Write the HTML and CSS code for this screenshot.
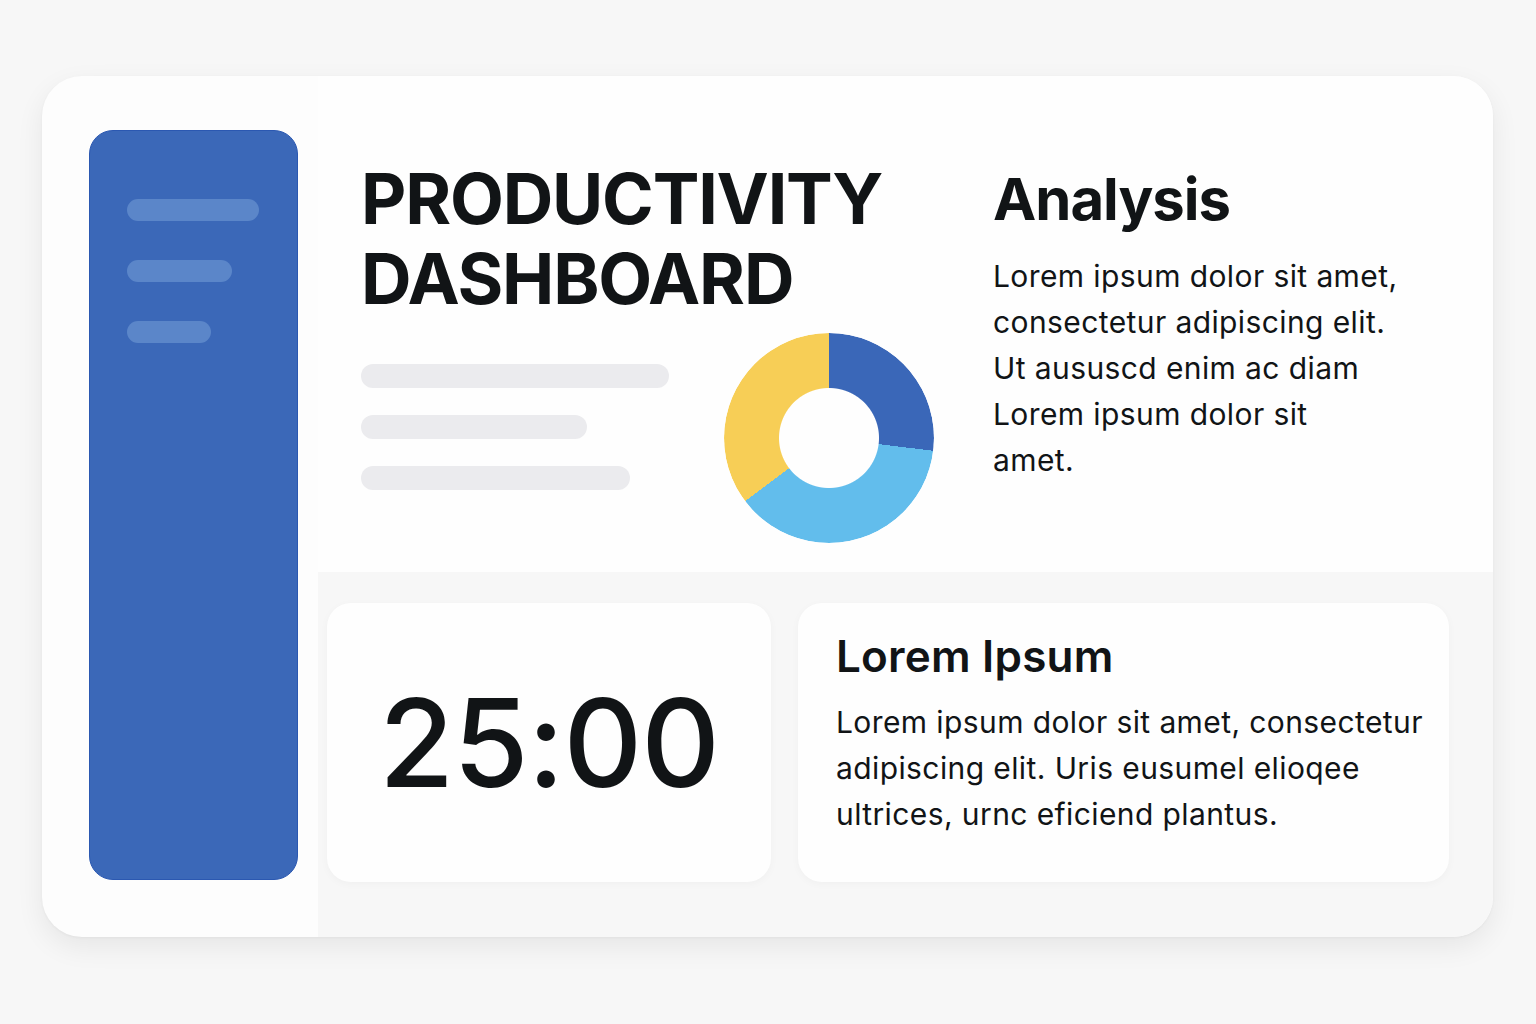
FILE: index.html
```html
<!DOCTYPE html>
<html lang="en">
<head>
<meta charset="utf-8">
<title>Productivity Dashboard</title>
<link rel="stylesheet" href="styles.css">
</head>
<body>
<div class="board">
  <div class="side-col">
    <nav class="sidebar">
      <span class="nav-bar nav-bar-1"></span>
      <span class="nav-bar nav-bar-2"></span>
      <span class="nav-bar nav-bar-3"></span>
    </nav>
  </div>
  <div class="main-col">
    <section class="top-panel">
      <div class="overview">
        <h1 class="title">PRODUCTIVITY<br>DASHBOARD</h1>
        <div class="overview-row">
          <div class="skeleton">
            <span class="sk sk-1"></span>
            <span class="sk sk-2"></span>
            <span class="sk sk-3"></span>
          </div>
          <div class="donut"></div>
        </div>
      </div>
      <div class="analysis">
        <h2 class="analysis-title">Analysis</h2>
        <p class="analysis-text">Lorem ipsum dolor sit amet,<br>consectetur adipiscing elit.<br>Ut aususcd enim ac diam<br>Lorem ipsum dolor sit<br>amet.</p>
      </div>
    </section>
    <section class="bottom-row">
      <div class="card timer-card">
        <span class="timer">25:00</span>
      </div>
      <div class="card info-card">
        <h3 class="info-title">Lorem Ipsum</h3>
        <p class="info-text">Lorem ipsum dolor sit amet, consectetur<br>adipiscing elit. Uris eusumel elioqee<br>ultrices, urnc eficiend plantus.</p>
      </div>
    </section>
  </div>
</div>
</body>
</html>
```
FILE: styles.css
```css
* { box-sizing: border-box; }
html, body { margin: 0; padding: 0; }
body {
  width: 1536px;
  height: 1024px;
  background: #f7f7f7;
  font-family: Inter, "Noto Sans", "Liberation Sans", sans-serif;
  color: #111416;
  padding: 76px 43px 0 42px;
}
.board {
  width: 1451px;
  height: 861px;
  background: #fdfdfd;
  border-radius: 40px;
  box-shadow: 0 10px 28px rgba(0, 0, 0, 0.07), 0 1px 3px rgba(0, 0, 0, 0.04);
  display: flex;
  overflow: hidden;
}
.side-col {
  width: 276px;
  padding: 54px 20px 57px 47px;
  flex: none;
}
.sidebar {
  height: 100%;
  background: #3b68b8;
  border: 1px solid #2b58b1;
  border-radius: 24px;
  display: flex;
  flex-direction: column;
  gap: 39px;
  padding: 68px 0 0 37px;
}
.nav-bar {
  display: block;
  height: 22px;
  border-radius: 11px;
  background: #5b86c9;
}
.nav-bar-1 { width: 132px; }
.nav-bar-2 { width: 105px; }
.nav-bar-3 { width: 84px; }
.main-col {
  flex: 1;
  display: flex;
  flex-direction: column;
}
.top-panel {
  height: 496px;
  background: #fefefe;
  display: flex;
  padding: 82px 0 0 43px;
}
.overview { width: 632px; flex: none; }
.title {
  margin: 0;
  font-size: 70px;
  line-height: 80px;
  font-weight: 700;
  letter-spacing: -1.2px;
  padding-top: 1px;
}
.overview-row {
  display: flex;
  align-items: flex-start;
  margin-top: 14px;
}
.skeleton {
  width: 308px;
  display: flex;
  flex-direction: column;
  gap: 27px;
  padding-top: 31px;
}
.sk {
  display: block;
  height: 24px;
  border-radius: 12px;
  background: #ebebee;
}
.sk-1 { width: 308px; }
.sk-2 { width: 226px; }
.sk-3 { width: 269px; }
.donut {
  width: 210px;
  height: 210px;
  margin-left: 55px;
  border-radius: 50%;
  background: conic-gradient(#3a67b8 0deg 97deg, #62bdec 97deg 233deg, #f7ce56 233deg 360deg);
  -webkit-mask: radial-gradient(circle at center, transparent 49.5px, #000 50.5px);
  mask: radial-gradient(circle at center, transparent 49.5px, #000 50.5px);
}
.analysis { padding-top: 5px; }
.analysis-title {
  margin: 0;
  font-size: 58px;
  line-height: 72px;
  font-weight: 700;
  letter-spacing: -1px;
}
.analysis-text {
  margin: 18px 0 0;
  font-size: 30px;
  line-height: 46px;
  font-weight: 400;
  letter-spacing: 0.4px;
}
.bottom-row {
  flex: 1;
  background: #f7f7f7;
  display: flex;
  gap: 27px;
  padding: 31px 44px 55px 9px;
}
.card {
  background: #fefefe;
  border-radius: 24px;
  box-shadow: 0 2px 8px rgba(0, 0, 0, 0.03);
}
.timer-card {
  width: 444px;
  display: flex;
  align-items: center;
  justify-content: center;
}
.timer {
  font-size: 122px;
  font-weight: 500;
  line-height: 1;
  letter-spacing: -1px;
}
.info-card {
  flex: 1;
  padding: 25px 10px 0 38px;
}
.info-title {
  margin: 0;
  font-size: 44px;
  line-height: 56px;
  font-weight: 600;
  letter-spacing: 0.2px;
}
.info-text {
  margin: 15px 0 0;
  font-size: 30px;
  line-height: 46px;
  font-weight: 400;
  letter-spacing: 0.4px;
  white-space: nowrap;
}
```
